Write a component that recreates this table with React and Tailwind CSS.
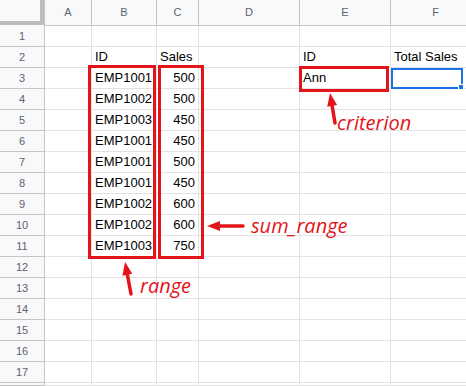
import React from 'react';

const COLS = [
    { key: 'A', w: 'w-[47px]' },
    { key: 'B', w: 'w-[65px]' },
    { key: 'C', w: 'w-[42px]' },
    { key: 'D', w: 'w-[101px]' },
    { key: 'E', w: 'w-[91px]' },
    { key: 'F', w: 'w-[90px]' },
];

// cell contents by row number
const DATA = {
    2: { B: 'ID', C: 'Sales', E: 'ID', F: 'Total Sales' },
    3: { B: 'EMP1001', C: '500', E: 'Ann' },
    4: { B: 'EMP1002', C: '500' },
    5: { B: 'EMP1003', C: '450' },
    6: { B: 'EMP1001', C: '450' },
    7: { B: 'EMP1001', C: '500' },
    8: { B: 'EMP1001', C: '450' },
    9: { B: 'EMP1002', C: '600' },
    10: { B: 'EMP1002', C: '600' },
    11: { B: 'EMP1003', C: '750' },
};

const RED = '#e3151a';
const isNumber = (v) => /^\d+$/.test(v);

const HeaderRow = () => (
    <div className="flex h-[26px] bg-[#f8f9fa]">
        <div className="w-[45px] shrink-0 relative border-r border-[#c4c4c4]">
            {/* frozen-pane bars in the corner */}
            <div className="absolute right-0 top-0 w-[4px] h-[25px] bg-[#bdbdbd]" />
            <div className="absolute left-0 top-[21px] w-[44px] h-[4px] bg-[#bdbdbd]" />
        </div>
        {COLS.map((c) => (
            <div
                key={c.key}
                className={`${c.w} shrink-0 border-r border-b border-[#c4c4c4] flex items-center justify-center text-[11px] text-[#5f6368]`}
            >
                {c.key}
            </div>
        ))}
    </div>
);

const Row = ({ n, h = 'h-[21px]' }) => {
    const row = DATA[n] || {};
    return (
        <div className={`flex ${h}`}>
            <div className="w-[45px] shrink-0 bg-[#f8f9fa] border-r border-b border-[#c4c4c4] flex items-center justify-center text-[11px] text-[#5f6368]">
                {n}
            </div>
            {COLS.map((c) => {
                const v = row[c.key];
                return (
                    <div
                        key={c.key}
                        className={`${c.w} shrink-0 border-r border-b border-[#e2e2e2] flex items-end pb-[1px] px-[3px] text-[13px] text-black whitespace-nowrap ${
                            v && isNumber(v) ? 'justify-end' : 'justify-start'
                        }`}
                    >
                        {v}
                    </div>
                );
            })}
        </div>
    );
};

// red arrow with a filled head, drawn in its own small box
const Arrow = ({ w, h, x1, y1, x2, y2 }) => {
    const dx = x2 - x1;
    const dy = y2 - y1;
    const len = Math.hypot(dx, dy);
    const ux = dx / len;
    const uy = dy / len;
    const hl = 13;
    const hw = 5;
    const bx = x2 - ux * hl;
    const by = y2 - uy * hl;
    const pts = `${x2},${y2} ${bx - uy * hw},${by + ux * hw} ${bx + uy * hw},${by - ux * hw}`;
    return (
        <svg width={w} height={h} className="shrink-0 overflow-visible">
            <line x1={x1} y1={y1} x2={bx} y2={by} stroke={RED} strokeWidth="3.5" strokeLinecap="round" />
            <polygon points={pts} fill={RED} />
        </svg>
    );
};

const Label = ({ children }) => (
    <span className="text-[20px] leading-none italic text-[#e3151a] font-['Open_Sans',sans-serif] whitespace-nowrap">
        {children}
    </span>
);

export default function App() {
    const rows = Array.from({ length: 17 }, (_, i) => i + 1);
    return (
        <div className="relative w-[466px] h-[386px] overflow-hidden bg-white font-['Liberation_Sans',Arial,sans-serif]">
            <HeaderRow />
            {rows.map((n) => (
                <Row key={n} n={n} />
            ))}
            <Row n="" h="h-[3px]" />

            {/* highlighted ranges */}
            <div className="absolute left-[88px] top-[65px] flex gap-[2px]">
                <div className="w-[68px] h-[194px] border-[3px] border-[#e3151a]" />
                <div className="w-[46px] h-[194px] border-[3px] border-[#e3151a]" />
            </div>
            <div className="absolute left-[299px] top-[66px] flex items-end gap-[2px]">
                <div className="w-[90px] h-[26px] border-[3px] border-[#e3151a]" />
                {/* active cell F3 */}
                <div className="relative mb-[3px] w-[72px] h-[21px] border-2 border-[#1a73e8]">
                    <div className="absolute -right-[3px] -bottom-[3px] w-[6px] h-[6px] bg-[#1a73e8] border border-white" />
                </div>
            </div>

            {/* callouts */}
            <div className="absolute left-[325px] top-[92px] flex items-start">
                <Arrow w={12} h={33} x1={10} y1={31} x2={5} y2={1} />
                <div className="mt-[21px]"><Label>criterion</Label></div>
            </div>
            <div className="absolute left-[205px] top-[213px] flex items-center gap-[6px]">
                <Arrow w={40} h={26} x1={38} y1={13} x2={2} y2={13} />
                <Label>sum_range</Label>
            </div>
            <div className="absolute left-[118px] top-[261px] flex items-start gap-[2px]">
                <Arrow w={20} h={36} x1={13} y1={33} x2={7} y2={1} />
                <div className="mt-[15px]"><Label>range</Label></div>
            </div>
        </div>
    );
}
